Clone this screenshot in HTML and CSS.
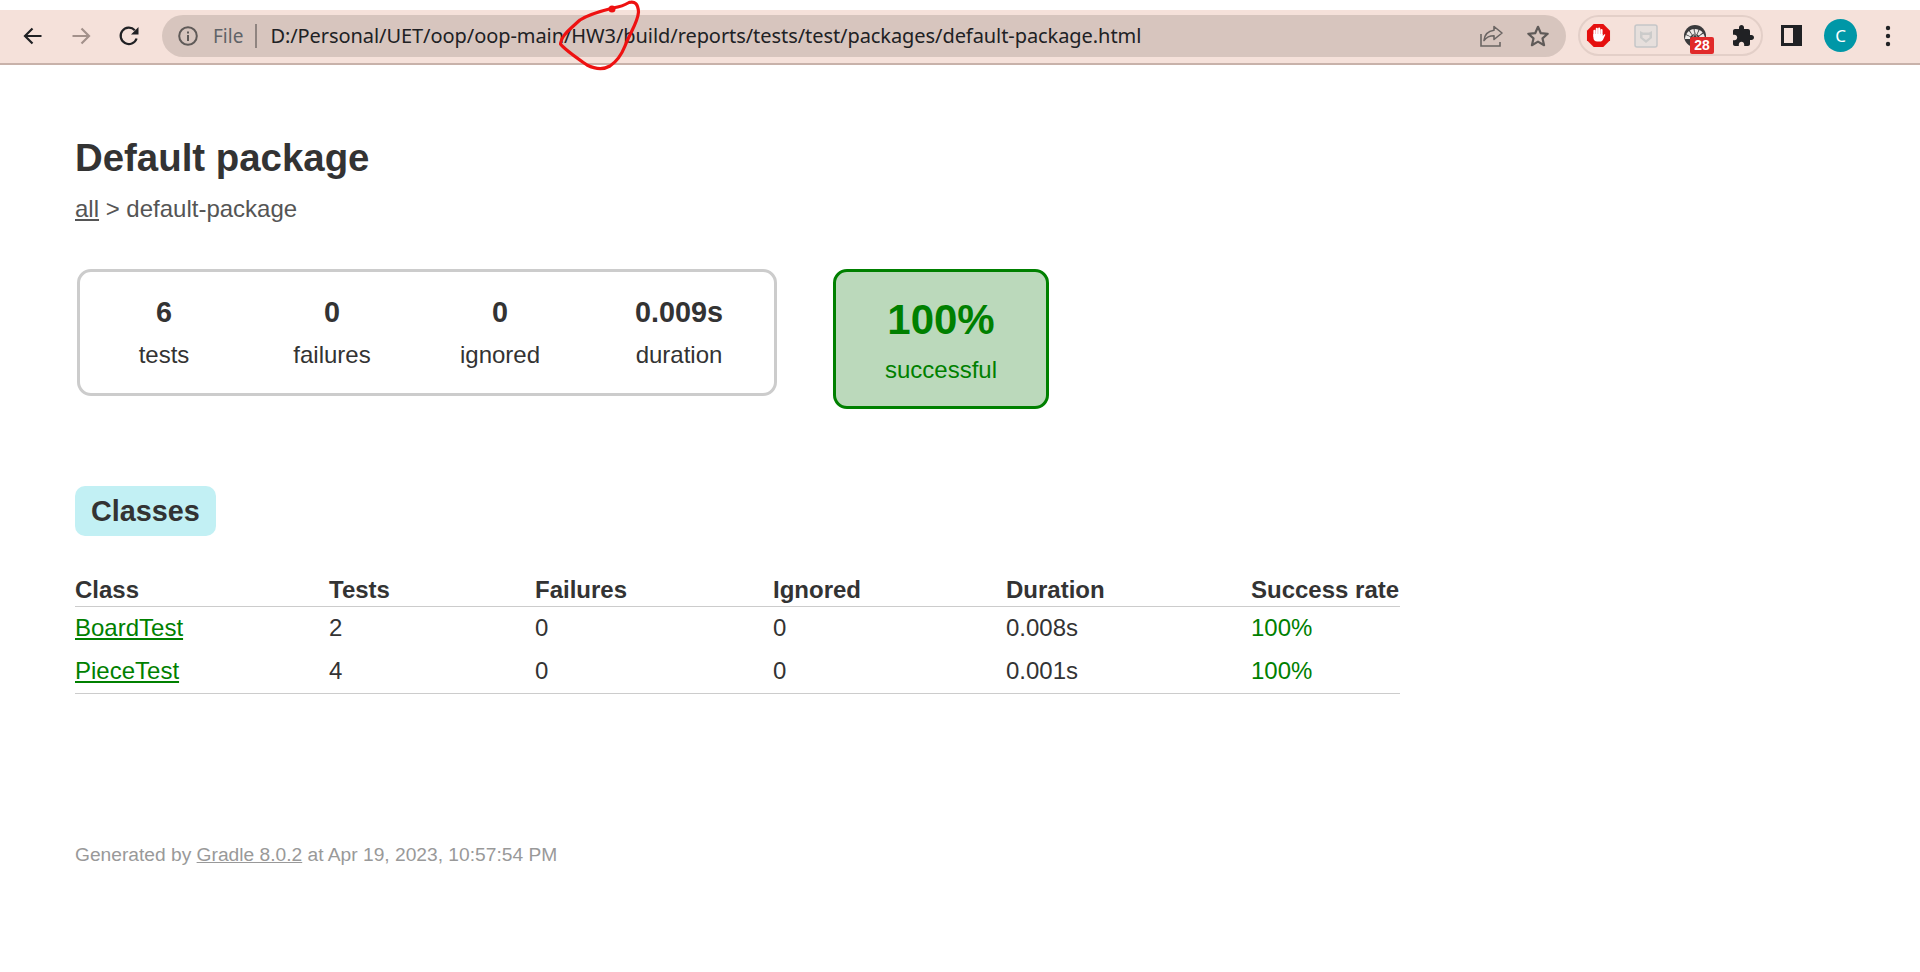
FILE: index.html
```html
<!DOCTYPE html>
<html lang="en">
<head>
    <meta charset="UTF-8">
    <meta name="viewport" content="width=device-width, initial-scale=1.0">
    <title>Test results - Default package</title>
    <link rel="stylesheet" href="styles.css">
</head>
<body>
    <div class="toolbar">
        <button class="nav-btn">
            <svg width="24" height="24" viewBox="0 0 24 24"><path d="M20.5 12H4.5M11.5 4.5L4 12l7.5 7.5" fill="none" stroke="#202124" stroke-width="2.2"/></svg>
        </button>
        <button class="nav-btn">
            <svg width="24" height="24" viewBox="0 0 24 24"><path d="M3.5 12h16M12.5 4.5L20 12l-7.5 7.5" fill="none" stroke="#a3918b" stroke-width="2.2"/></svg>
        </button>
        <button class="nav-btn">
            <svg width="24" height="24" viewBox="0 0 24 24"><path d="M19.6 14.5A8.2 8.2 0 1 1 17.8 6.2" fill="none" stroke="#202124" stroke-width="2.2"/><path d="M21.5 3v7.5H14z" fill="#202124"/></svg>
        </button>

        <div class="omnibox">
            <svg class="info-icon" width="22" height="22" viewBox="0 0 22 22"><circle cx="11" cy="11" r="8.8" fill="none" stroke="#5f5a58" stroke-width="2"/><rect x="10" y="10" width="2" height="6" fill="#5f5a58"/><rect x="10" y="6.5" width="2" height="2" fill="#5f5a58"/></svg>
            <span class="scheme">File</span>
            <span class="url-sep"></span>
            <span class="url">D:/Personal/UET/oop/oop-main/HW3/build/reports/tests/test/packages/default-package.html</span>
            <svg class="share-icon" width="26" height="26" viewBox="0 0 26 26"><path d="M3 11v12h19v-4" fill="none" stroke="#6b6563" stroke-width="1.6"/><path d="M16 3.5l8 6.5-8 6.5v-3.8c-4.500 0-7.500 1.300-10 4.800 .5-5.500 3.500-9.500 10-10.300z" fill="none" stroke="#6b6563" stroke-width="1.6" stroke-linejoin="round"/></svg>
            <svg class="star-icon" width="24" height="24" viewBox="0 0 24 24"><path d="M12 2.800l2.800 6.400 6.900.6-5.200 4.600 1.600 6.800-6.100-3.600-6.100 3.600 1.600-6.800-5.200-4.600 6.900-.6z" fill="none" stroke="#5f5a58" stroke-width="2.200" stroke-linejoin="round"/></svg>
        </div>

        <div class="ext-pill">
            <svg class="ext-stop" width="25" height="25" viewBox="0 0 26 26">
                <path d="M8 1h10l7 7v10l-7 7H8l-7-7V8z" fill="#e5100f"/>
                <g transform="translate(1.8 1.6) scale(.82)">
                    <path d="M8.500 15V8M11.500 13V5.500M14.500 13V5M17.500 14V7" fill="none" stroke="#fff" stroke-width="2.700" stroke-linecap="round"/>
                    <path d="M7.200 12h11.600v3l2-2.500c.8-.8 1.800 0 1.400.9l-2.500 5.100c-.9 2-2.300 3-4.200 3h-3.500c-2.800 0-4.800-2-4.800-4.800z" fill="#fff"/>
                </g>
            </svg>
            <svg class="ext-shield" width="24" height="24" viewBox="0 0 24 24">
                <rect x="1" y="1" width="22" height="22" rx="2" fill="#e6dfdc" stroke="#c5c6c8" stroke-width="1.500"/>
                <path d="M6 7l3 1.500h6L18 7v7l-6 5-6-5zM8.500 11v2.500L12 16l3.500-2.500V11H12z" fill="#cbcbca" fill-rule="evenodd"/>
            </svg>
            <div class="ext-gauge">
                <svg width="24" height="24" viewBox="0 0 24 24">
                    <circle cx="12" cy="12" r="11" fill="#3a3a3c"/>
                    <path d="M4.500 15a7.500 7.500 0 0 1 15 0" fill="none" stroke="#eeeae8" stroke-width="5" stroke-dasharray="3 .8"/>
                    <path d="M9 15l3-6 3 6" fill="none" stroke="#8d8a89" stroke-width="1.400"/>
                </svg>
                <span class="ext-badge">28</span>
            </div>
            <svg class="ext-puzzle" width="24" height="24" viewBox="0 0 24 24"><path d="M20.500 11H19V7c0-1.100-.9-2-2-2h-4V3.500C13 2.120 11.880 1 10.500 1S8 2.120 8 3.500V5H4c-1.100 0-1.990.9-1.990 2v3.800H3.500c1.490 0 2.700 1.210 2.700 2.700s-1.210 2.700-2.700 2.700H2V20c0 1.100.9 2 2 2h3.800v-1.500c0-1.490 1.210-2.700 2.700-2.700 1.490 0 2.700 1.210 2.700 2.700V22H17c1.100 0 2-.9 2-2v-4h1.500c1.380 0 2.500-1.120 2.500-2.500S21.880 11 20.500 11z" fill="#202124"/></svg>
        </div>

        <span class="side-panel"></span>
        <span class="avatar">C</span>
        <svg class="menu-dots" width="6" height="22" viewBox="0 0 6 22"><circle cx="3" cy="3" r="2.200" fill="#202124"/><circle cx="3" cy="11" r="2.200" fill="#202124"/><circle cx="3" cy="19" r="2.200" fill="#202124"/></svg>
    </div>

    <!-- red marker circle drawn over the address bar -->
    <svg class="scribble" width="100" height="75" viewBox="0 0 100 75">
        <path d="M70 2.500C76 1 79 4 79.500 12 79 22 71 33 66 46 62 56 57 62 51 66 44 70 36 69 28 65 18 58 6 50 1.500 44 2 36 10 30 21 20 30 14 42 11 54 8 60 7 66 5 70 2.500" fill="none" stroke="#ee1111" stroke-width="3.200" stroke-linecap="round" stroke-linejoin="round"/>
        <circle cx="53" cy="9" r="3.500" fill="#ee1111"/>
    </svg>

    <div class="content">
        <h1>Default package</h1>
        <div class="breadcrumbs"><a href="#">all</a> &gt; default-package</div>

        <div class="summary">
            <div class="info-box">
                <div class="stat">
                    <div class="counter">6</div>
                    <p>tests</p>
                </div>
                <div class="stat">
                    <div class="counter">0</div>
                    <p>failures</p>
                </div>
                <div class="stat">
                    <div class="counter">0</div>
                    <p>ignored</p>
                </div>
                <div class="stat">
                    <div class="counter">0.009s</div>
                    <p>duration</p>
                </div>
            </div>
            <div class="success-rate">
                <div class="percent">100%</div>
                <p>successful</p>
            </div>
        </div>

        <h2 class="tab-title">Classes</h2>

        <table class="results">
            <thead>
                <tr>
                    <th class="col-class">Class</th>
                    <th class="col-tests">Tests</th>
                    <th class="col-failures">Failures</th>
                    <th class="col-ignored">Ignored</th>
                    <th class="col-duration">Duration</th>
                    <th class="col-rate">Success rate</th>
                </tr>
            </thead>
            <tbody>
                <tr>
                    <td><a class="success" href="#">BoardTest</a></td>
                    <td>2</td>
                    <td>0</td>
                    <td>0</td>
                    <td>0.008s</td>
                    <td class="success">100%</td>
                </tr>
                <tr>
                    <td><a class="success" href="#">PieceTest</a></td>
                    <td>4</td>
                    <td>0</td>
                    <td>0</td>
                    <td>0.001s</td>
                    <td class="success">100%</td>
                </tr>
            </tbody>
        </table>

        <div class="footer">Generated by <a href="#">Gradle 8.0.2</a> at Apr 19, 2023, 10:57:54 PM</div>
    </div>
</body>
</html>
```

FILE: styles.css
```css
* {
    margin: 0;
    padding: 0;
    box-sizing: border-box;
}

body {
    font-family: "Liberation Sans", Arial, sans-serif;
    font-size: 24px;
    color: #333;
    background: #fff;
    padding-top: 10px;
    overflow: hidden;
}

/* browser chrome */
.toolbar {
    display: flex;
    align-items: center;
    height: 55px;
    padding: 0 0 2px 9px;
    background: #f5e1da;
    border-bottom: 2px solid #c8b2aa;
}

.nav-btn {
    display: flex;
    align-items: center;
    justify-content: center;
    width: 48px;
    height: 42px;
    border: none;
    background: none;
}

.omnibox {
    display: flex;
    align-items: center;
    width: 1404px;
    height: 42px;
    margin-left: 9px;
    padding: 0 16px 0 15px;
    background: #d7c5be;
    border-radius: 21px;
    font-family: "Noto Sans", sans-serif;
}

.scheme {
    margin-left: 14px;
    font-size: 19px;
    color: #5f6368;
}

.url-sep {
    width: 2px;
    height: 24px;
    margin: 0 13px 0 12px;
    background: #8f8480;
}

.url {
    flex: 1;
    font-size: 20px;
    letter-spacing: -0.07px;
    color: #202124;
    white-space: nowrap;
}

.star-icon {
    margin-left: 22px;
}

.ext-pill {
    display: flex;
    align-items: center;
    width: 185px;
    height: 41px;
    margin-left: 12px;
    padding-left: 6px;
    border: 2px solid #e3cfc8;
    border-radius: 21px;
}

.ext-shield {
    margin-left: 23px;
}

.ext-gauge {
    position: relative;
    width: 24px;
    height: 24px;
    margin-left: 25px;
}

.ext-badge {
    position: absolute;
    left: 7px;
    top: 13px;
    width: 24px;
    height: 17px;
    background: #e12a2a;
    border-radius: 2px;
    color: #fff;
    font-family: "Liberation Sans", sans-serif;
    font-size: 14px;
    font-weight: bold;
    line-height: 17px;
    text-align: center;
}

.ext-puzzle {
    margin-left: 24px;
}

.side-panel {
    width: 21px;
    height: 21px;
    margin-left: 18px;
    border: 3px solid #202124;
    border-right-width: 9px;
}

.avatar {
    width: 33px;
    height: 33px;
    margin-left: 22px;
    border-radius: 50%;
    background: #0097a7;
    color: #fff;
    font-family: "Noto Sans", sans-serif;
    font-size: 17px;
    line-height: 33px;
    text-align: center;
}

.menu-dots {
    margin-left: 28px;
}

.scribble {
    position: absolute;
    left: 559px;
    top: 0;
}

/* report */
.content {
    padding: 71px 0 0 75px;
}

h1 {
    font-size: 38.4px;
    line-height: 44px;
    margin-bottom: 15px;
}

.breadcrumbs {
    color: #555;
    line-height: 28px;
}

.breadcrumbs a {
    color: #555;
}

.summary {
    display: flex;
    align-items: flex-start;
    margin: 46px 0 0 2px;
}

.info-box {
    display: grid;
    grid-template-columns: 168px 168px 168px 1fr;
    width: 700px;
    height: 127px;
    padding-top: 24px;
    border: 3px solid #ccc;
    border-radius: 14px;
    text-align: center;
}

.counter {
    font-size: 28.8px;
    font-weight: bold;
    line-height: 33px;
}

.stat p {
    margin-top: 12px;
    line-height: 28px;
}

.success-rate {
    width: 216px;
    height: 140px;
    margin-left: 56px;
    padding-top: 23px;
    background: #bbd9bb;
    border: 3px solid #008000;
    border-radius: 14px;
    color: #008000;
    text-align: center;
}

.percent {
    font-size: 42px;
    font-weight: bold;
    line-height: 50px;
}

.success-rate p {
    margin-top: 11px;
    line-height: 28px;
}

.tab-title {
    display: inline-block;
    margin-top: 77px;
    padding: 0 16px;
    background: #c2f0f4;
    border-radius: 10px;
    font-size: 28.8px;
    line-height: 50px;
}

.results {
    width: 1325px;
    margin-top: 40px;
    border-collapse: collapse;
    table-layout: fixed;
}

.results th {
    height: 30px;
    border-bottom: 1px solid #ccc;
    text-align: left;
    vertical-align: top;
    line-height: 28px;
}

.results td {
    height: 43px;
    line-height: 28px;
}

.results tbody tr:last-child td {
    height: 44px;
    border-bottom: 1px solid #ccc;
}

.col-class { width: 254px; }
.col-tests { width: 206px; }
.col-failures { width: 238px; }
.col-ignored { width: 233px; }
.col-duration { width: 245px; }
.col-rate { width: 149px; }

.success {
    color: #008000;
}

.footer {
    margin-top: 149px;
    font-size: 19.2px;
    line-height: 24px;
    color: #999;
}

.footer a {
    color: #999;
}
```
